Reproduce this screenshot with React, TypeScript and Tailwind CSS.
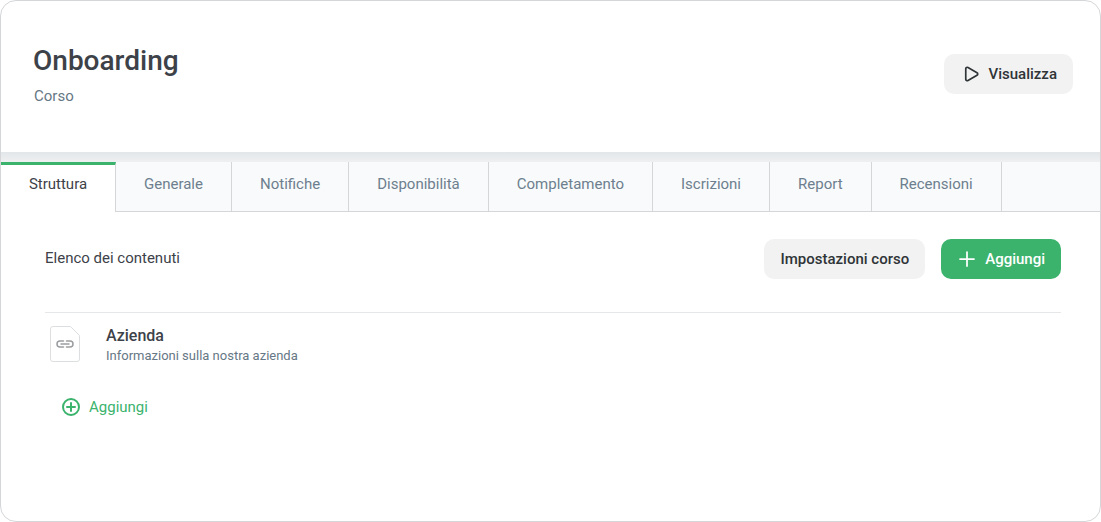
import { Play, Plus } from "lucide-react";

const tabs = ["Generale", "Notifiche", "Disponibilità", "Completamento", "Iscrizioni", "Report", "Recensioni"];

export default function App() {
  return (
    <div className="h-[522px] w-[1101px] bg-white font-['Roboto',sans-serif]">
      <div className="flex h-full flex-col overflow-hidden rounded-[16px] border border-[#d4d6d8] bg-white">
        {/* Header */}
        <header className="flex h-[151px] items-center justify-between pl-[32px] pr-[27px]">
          <div className="mt-[-4px]">
            <h1 className="text-[28px] leading-[36px] font-medium text-[#3d4249]">Onboarding</h1>
            <p className="mt-[7px] pl-[1px] text-[15px] leading-[20px] text-[#667785]">Corso</p>
          </div>
          <button className="mt-[-6px] flex h-[40px] items-center gap-[9px] rounded-[10px] bg-[#f2f2f2] pl-[18px] pr-[16px] pt-[1px] text-[15px] font-medium text-[#2f3437]">
            <Play size={18} strokeWidth={2.25} />
            Visualizza
          </button>
        </header>

        <div className="h-[10px] bg-gradient-to-b from-[#e3e6e8] to-[#eef0f2]" />

        {/* Tabs */}
        <nav className="flex h-[50px] border-b border-[#d4d6d8] bg-[#f8fafb]">
          <div className="mb-[-1px] flex w-[115px] items-center justify-center border-t-[3px] border-r border-t-[#3bb36d] border-r-[#d4d6d8] bg-white pb-[8px] text-[15px] text-[#3d4249]">
            Struttura
          </div>
          {tabs.map((tab) => (
            <div
              key={tab}
              className="flex items-center border-r border-[#d4d6d8] px-[28px] pb-[5px] text-[15px] text-[#6d7f8e]"
            >
              {tab}
            </div>
          ))}
        </nav>

        {/* Contents */}
        <main className="flex-1 pl-[44px] pr-[39px] pt-[27px]">
          <div className="flex items-center justify-between border-b border-[#e6e7e8] pb-[33px]">
            <span className="mt-[-2px] text-[15px] text-[#3d4249]">Elenco dei contenuti</span>
            <div className="flex gap-[16px]">
              <button className="h-[40px] rounded-[10px] bg-[#f2f2f2] px-[16px] text-[15px] font-medium text-[#2f3437]">
                Impostazioni corso
              </button>
              <button className="flex h-[40px] items-center gap-[6px] rounded-[10px] bg-[#3bb36d] pl-[14px] pr-[16px] text-[15px] font-medium text-white">
                <Plus size={24} strokeWidth={1.75} />
                Aggiungi
              </button>
            </div>
          </div>

          <div className="mt-[13px] flex items-center gap-[26px] pl-[5px]">
            <svg className="mt-[-4px]" width="30" height="36" viewBox="0 0 30 36" fill="none">
              <path d="M3 .5h17.500l9 9V33a2.500 2.500 0 0 1-2.500 2.500H3A2.500 2.500 0 0 1 .5 33V3A2.500 2.500 0 0 1 3 .5Z" fill="#fff" stroke="#dcdee0" />
              <path d="M13.500 15h-3.500a3 3 0 0 0 0 6h3.500M16.500 15H20a3 3 0 0 1 0 6h-3.500M11 18h8" stroke="#9a9da0" strokeWidth="1.500" strokeLinecap="round" />
            </svg>
            <div>
              <div className="text-[16px] leading-[20px] font-medium text-[#3d4249]">Azienda</div>
              <div className="mt-[1px] text-[13px] leading-[18px] text-[#667785]">Informazioni sulla nostra azienda</div>
            </div>
          </div>

          <button className="mt-[31px] ml-[16px] flex items-center gap-[8px] text-[15px] text-[#3bb36d]">
            <svg width="20" height="20" viewBox="0 0 20 20" fill="none" stroke="#3bb36d" strokeWidth="2" strokeLinecap="round">
              <circle cx="10" cy="10" r="8" />
              <path d="M10 6v8M6 10h8" />
            </svg>
            Aggiungi
          </button>
        </main>
      </div>
    </div>
  );
}
